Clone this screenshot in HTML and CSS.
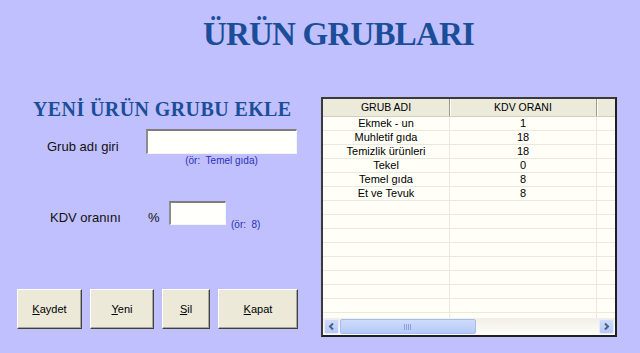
FILE: index.html
```html
<!DOCTYPE html>
<html lang="tr">

<head>
    <meta charset="UTF-8">
    <meta name="viewport" content="width=device-width, initial-scale=1.0">
    <title>Ürün Grupları</title>
    <link rel="stylesheet" href="styles.css">
</head>

<body>
    <div class="page">
        <h1 class="title">ÜRÜN GRUBLARI</h1>

        <div class="main">
            <div class="form-panel">
                <h2 class="subtitle">YENİ ÜRÜN GRUBU EKLE</h2>

                <div class="field field-name">
                    <label class="label">Grub adı giri</label>
                    <div class="input-wrap">
                        <input class="text-input name-input" type="text">
                        <div class="hint hint-under">(ör:&nbsp; Temel gıda)</div>
                    </div>
                </div>

                <div class="field field-kdv">
                    <label class="label label-kdv">KDV oranını</label>
                    <span class="percent">%</span>
                    <input class="text-input kdv-input" type="text">
                    <span class="hint hint-side">(ör:&nbsp; 8)</span>
                </div>

                <div class="buttons">
                    <button class="btn btn-kaydet"><u>K</u>aydet</button>
                    <button class="btn btn-yeni"><u>Y</u>eni</button>
                    <button class="btn btn-sil"><u>S</u>il</button>
                    <button class="btn btn-kapat"><u>K</u>apat</button>
                </div>
            </div>

            <div class="grid">
                <div class="grid-head">
                    <div class="hcell col-name">GRUB ADI</div>
                    <div class="hcell col-kdv">KDV ORANI</div>
                    <div class="hcell col-rest"></div>
                </div>

                <div class="grid-body">
                    <div class="row"><div class="cell col-name">Ekmek - un</div><div class="cell col-kdv">1</div><div class="cell col-rest"></div></div>
                    <div class="row"><div class="cell col-name">Muhletif gıda</div><div class="cell col-kdv">18</div><div class="cell col-rest"></div></div>
                    <div class="row"><div class="cell col-name">Temizlik ürünleri</div><div class="cell col-kdv">18</div><div class="cell col-rest"></div></div>
                    <div class="row"><div class="cell col-name">Tekel</div><div class="cell col-kdv">0</div><div class="cell col-rest"></div></div>
                    <div class="row"><div class="cell col-name">Temel gıda</div><div class="cell col-kdv">8</div><div class="cell col-rest"></div></div>
                    <div class="row"><div class="cell col-name">Et ve Tevuk</div><div class="cell col-kdv">8</div><div class="cell col-rest"></div></div>
                    <div class="row"><div class="cell col-name"></div><div class="cell col-kdv"></div><div class="cell col-rest"></div></div>
                    <div class="row"><div class="cell col-name"></div><div class="cell col-kdv"></div><div class="cell col-rest"></div></div>
                    <div class="row"><div class="cell col-name"></div><div class="cell col-kdv"></div><div class="cell col-rest"></div></div>
                    <div class="row"><div class="cell col-name"></div><div class="cell col-kdv"></div><div class="cell col-rest"></div></div>
                    <div class="row"><div class="cell col-name"></div><div class="cell col-kdv"></div><div class="cell col-rest"></div></div>
                    <div class="row"><div class="cell col-name"></div><div class="cell col-kdv"></div><div class="cell col-rest"></div></div>
                    <div class="row"><div class="cell col-name"></div><div class="cell col-kdv"></div><div class="cell col-rest"></div></div>
                    <div class="row"><div class="cell col-name"></div><div class="cell col-kdv"></div><div class="cell col-rest"></div></div>
                    <div class="row"><div class="cell col-name"></div><div class="cell col-kdv"></div><div class="cell col-rest"></div></div>
                </div>

                <div class="hscroll">
                    <div class="sb-btn">
                        <svg width="9" height="9" viewBox="0 0 9 9"><path d="M6 1.5 L3 4.5 L6 7.5" fill="none" stroke="#4d6185" stroke-width="2"/></svg>
                    </div>
                    <div class="sb-track">
                        <div class="sb-thumb">
                            <svg width="8" height="6" viewBox="0 0 8 6"><path d="M0.5 0 V6 M2.5 0 V6 M4.5 0 V6 M6.5 0 V6" stroke="#8aa3e0" stroke-width="1"/></svg>
                        </div>
                    </div>
                    <div class="sb-btn">
                        <svg width="9" height="9" viewBox="0 0 9 9"><path d="M3 1.5 L6 4.5 L3 7.5" fill="none" stroke="#4d6185" stroke-width="2"/></svg>
                    </div>
                </div>
            </div>
        </div>
    </div>
</body>

</html>
```

FILE: styles.css
```css
body {
    margin: 0;
    background-color: #c0c0ff;
    font-family: "Liberation Sans", Arial, sans-serif;
    color: #000;
}

.page {
    width: 640px;
    height: 353px;
    overflow: hidden;
}

.title {
    margin: 14px 0 43px 203px;
    font-family: "Liberation Serif", "Times New Roman", serif;
    font-size: 33px;
    line-height: 40px;
    letter-spacing: -0.8px;
    font-weight: bold;
    color: #1b4d98;
}

.main {
    display: flex;
    align-items: flex-start;
}

/* left side: form */
.form-panel {
    width: 321px;
}

.subtitle {
    margin: 0 0 0 33px;
    font-family: "Liberation Serif", "Times New Roman", serif;
    font-size: 20px;
    line-height: 24px;
    letter-spacing: 0.4px;
    font-weight: bold;
    color: #1b4d98;
}

.field {
    display: flex;
    align-items: flex-start;
    padding-left: 47px;
    height: 25px;
}

.field-name {
    margin-top: 8px;
}

.field-kdv {
    margin-top: 47px;
    height: 24px;
}

.label {
    font-size: 13px;
    line-height: 15px;
    padding-top: 10px;
    width: 99px;
    color: #111;
}

.label-kdv {
    padding-top: 9px;
    padding-left: 3px;
    width: 97px;
}

.percent {
    font-size: 13px;
    line-height: 15px;
    padding-top: 9px;
    padding-left: 1px;
    width: 21px;
    color: #111;
}

.text-input {
    box-sizing: border-box;
    margin: 0;
    padding: 0 3px;
    border-style: solid;
    border-width: 2px 1px 1px 2px;
    border-color: #7d7d7d #f6f6f6 #f6f6f6 #8c8c8c;
    background-color: #fffffb;
    font-family: inherit;
    font-size: 12px;
    outline: none;
}

.name-input {
    width: 151px;
    height: 25px;
}

.kdv-input {
    width: 57px;
    height: 24px;
}

.hint {
    font-size: 10px;
    line-height: 12px;
    color: #2a30b5;
    white-space: nowrap;
}

.hint-under {
    margin-top: 1px;
    text-align: center;
}

.hint-side {
    margin-left: 5px;
    padding-top: 18px;
}

.buttons {
    display: flex;
    gap: 8px;
    margin: 64px 0 0 17px;
}

.btn {
    box-sizing: border-box;
    height: 40px;
    padding: 0;
    background-color: #ece9d8;
    border: 1px solid;
    border-color: #ffffff #404040 #404040 #ffffff;
    box-shadow: inset -1px -1px 0 #aca899;
    font-family: inherit;
    font-size: 11px;
    color: #000;
}

.btn-kaydet { width: 65px; }
.btn-yeni { width: 64px; }
.btn-sil { width: 48px; }
.btn-kapat { width: 80px; }

/* right side: grid */
.grid {
    box-sizing: border-box;
    width: 296px;
    height: 240px;
    border: 2px solid #1f1f1f;
    border-top-color: #3a3a3a;
    border-left-color: #3a3a3a;
    background-color: #fffff8;
    display: flex;
    flex-direction: column;
}

.grid-head {
    display: flex;
    height: 17px;
    border-bottom: 1px solid #d2cfbf;
    background-color: #ebeadb;
}

.hcell {
    box-sizing: border-box;
    font-size: 10.5px;
    line-height: 17px;
    text-align: center;
    border-right: 1px solid #9d9a8a;
    box-shadow: 1px 0 0 #ffffff;
}

.col-name { width: 127px; }
.col-kdv { width: 147px; }
.col-rest { flex: 1; }

.hcell.col-rest {
    border-right: none;
    box-shadow: none;
}

.grid-body {
    flex: 1;
    overflow: hidden;
}

.row {
    display: flex;
    height: 14px;
    border-bottom: 1px solid #ebe9df;
    box-sizing: border-box;
}

.cell {
    box-sizing: border-box;
    font-size: 11px;
    line-height: 13px;
    text-align: center;
    border-right: 1px solid #ebe9df;
    white-space: nowrap;
}

.cell.col-rest {
    border-right: none;
}

.hscroll {
    display: flex;
    align-items: center;
    height: 17px;
    padding: 0 1px;
    background: linear-gradient(#f1efe6, #fdfdf9);
}

.sb-btn {
    box-sizing: border-box;
    width: 15px;
    height: 15px;
    display: flex;
    align-items: center;
    justify-content: center;
    border: 1px solid #e4ebfb;
    border-radius: 2px;
    background: linear-gradient(#cfdbfb, #b6c9f6);
}

.sb-track {
    flex: 1;
    height: 15px;
    padding-left: 1px;
}

.sb-thumb {
    box-sizing: border-box;
    width: 136px;
    height: 15px;
    display: flex;
    align-items: center;
    justify-content: center;
    border: 1px solid #a7bcee;
    border-radius: 2px;
    background: linear-gradient(#cddbfc, #b7caf7);
}
```
